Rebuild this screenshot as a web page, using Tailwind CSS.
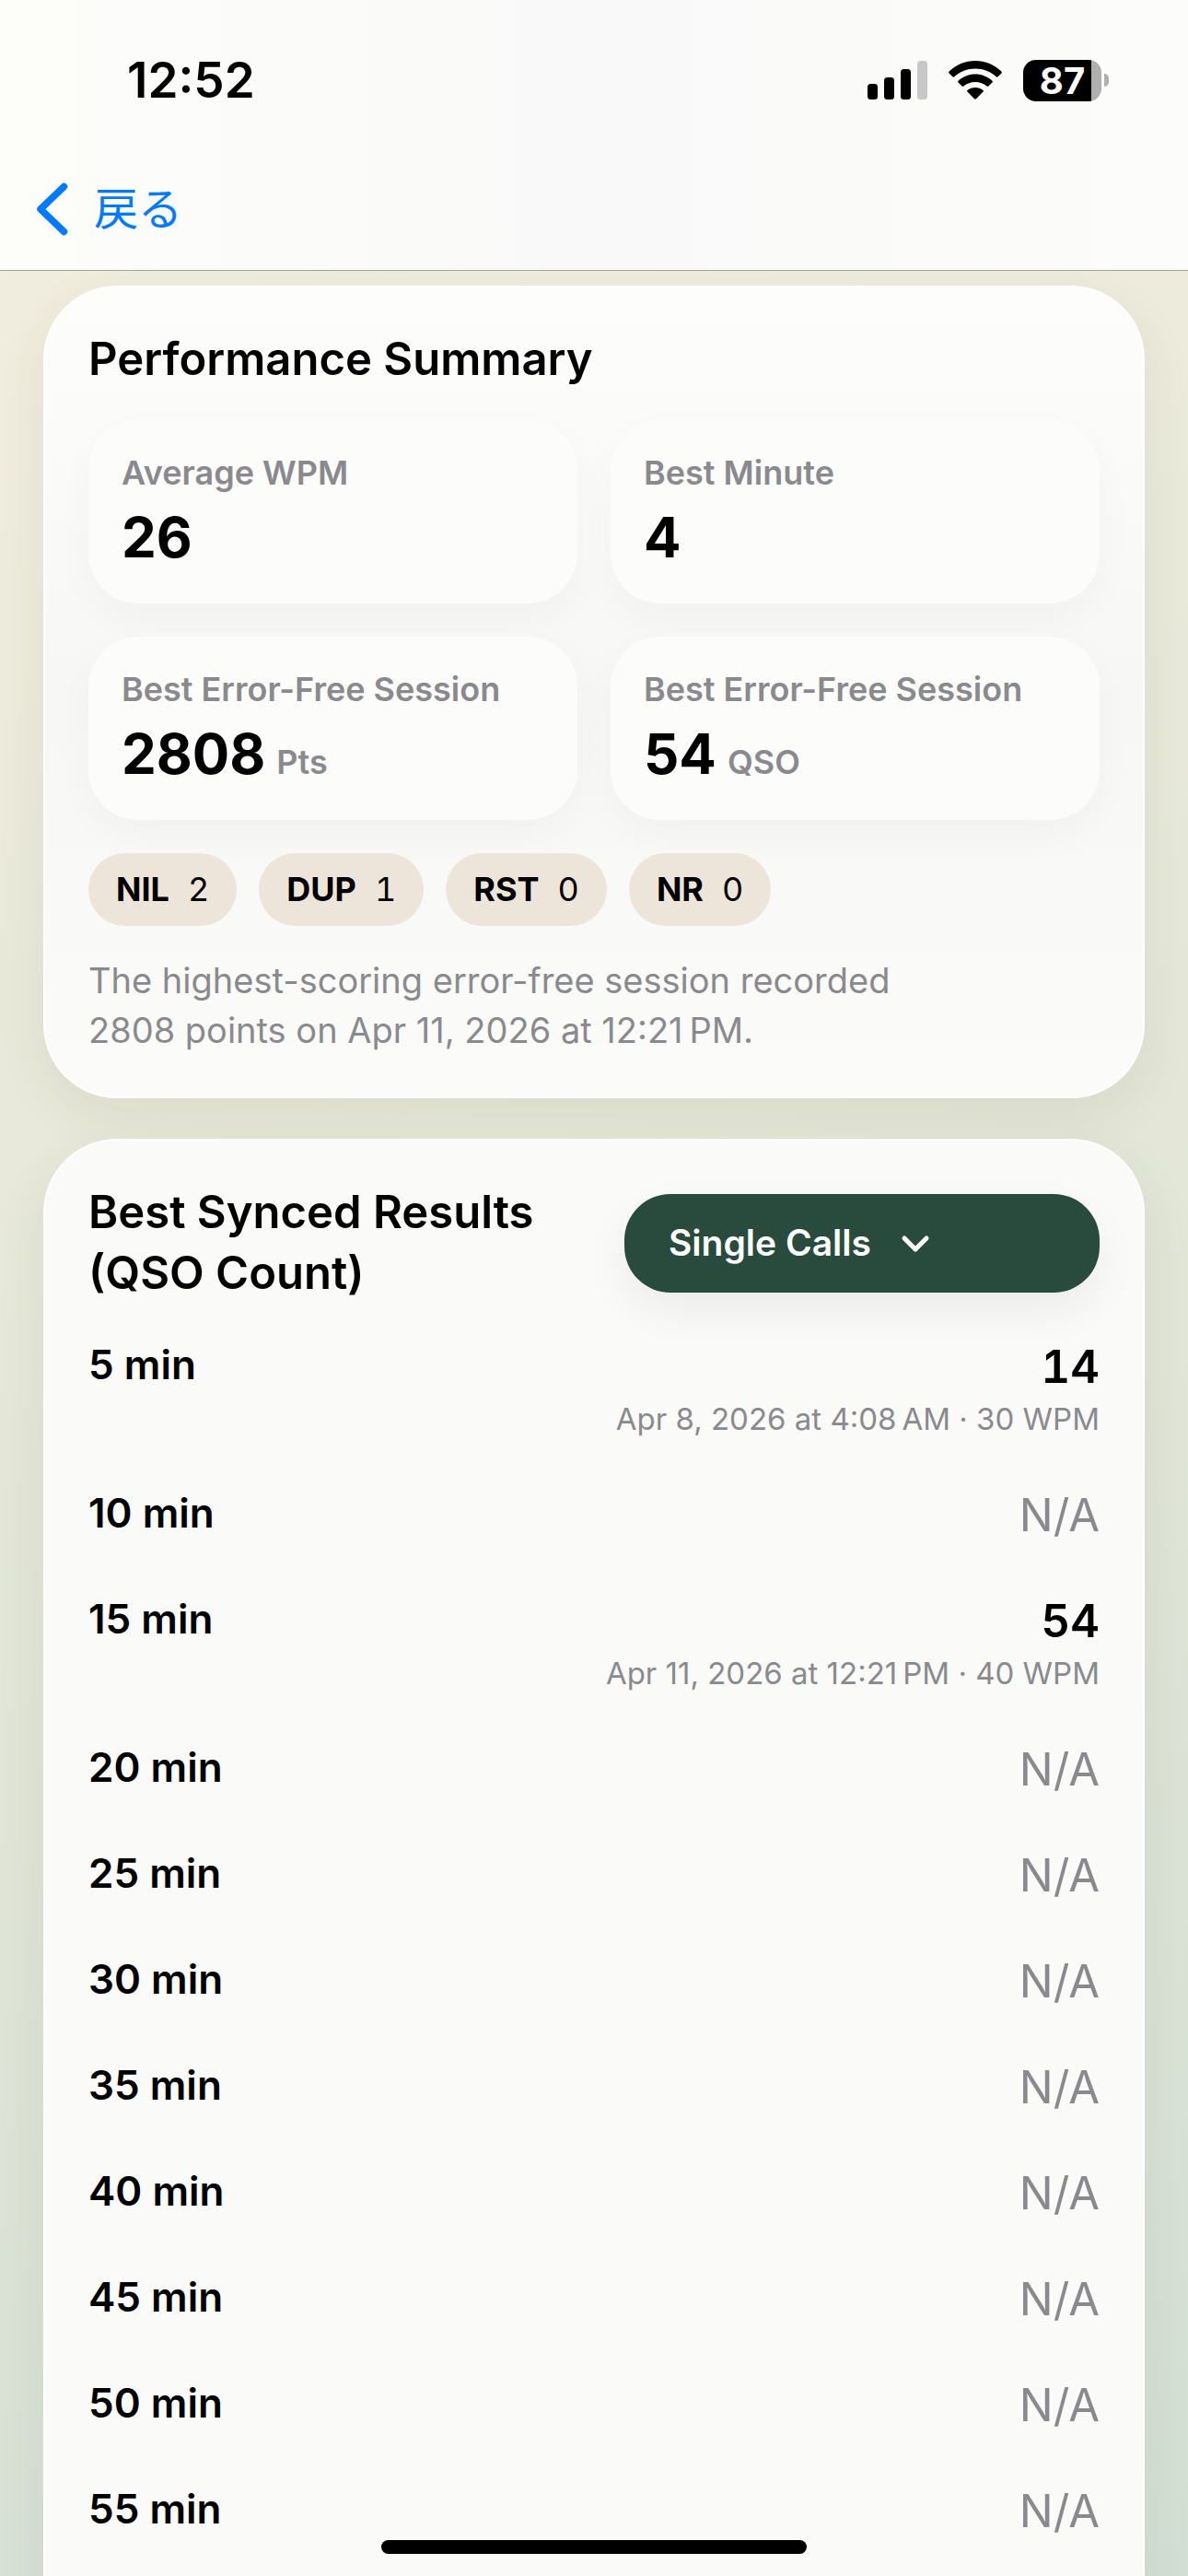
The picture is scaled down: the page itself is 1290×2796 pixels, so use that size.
<!DOCTYPE html>
<html lang="ja">
<head>
    <meta charset="UTF-8">
    <meta name="viewport" content="width=device-width, initial-scale=1.0" />
    <script src="https://cdn.jsdelivr.net/npm/@tailwindcss/browser@4"></script>
    <title>Performance Summary</title>
</head>
<body class="h-screen overflow-hidden flex flex-col bg-linear-160 from-[#f4efe0] via-[#e4e7d8] to-[#d3dfd4] text-black font-['Inter','Noto_Sans_CJK_JP',sans-serif]">

<header class="relative z-10 shrink-0 border-b border-[#a3a399] bg-linear-to-r from-[#fdfdfa] via-[#f9f9f9] to-[#fcfcfa]">
    <!-- status bar -->
    <div class="flex items-center justify-between h-[174px] pl-[138px] pr-[86px]">
        <time class="text-[53px] leading-[64px] font-semibold">12:52</time>
        <div class="flex items-center gap-[23px]">
            <svg class="w-[65px] h-[42px]" viewBox="0 0 65 42" aria-hidden="true">
                <rect x="0" y="25" width="11" height="17" rx="3.5"/>
                <rect x="18" y="18" width="11" height="24" rx="3.5"/>
                <rect x="36" y="9" width="11" height="33" rx="3.5"/>
                <rect x="54" y="0" width="11" height="42" rx="3.5" fill="#c8c8c8"/>
            </svg>
            <svg class="w-[58px] h-[42px]" viewBox="0 0 58 42" aria-hidden="true">
                <path d="M29 0C40 0 50 4.300 57.300 11.600C58 12.200 58 12.800 57.500 13.400L53.600 17.300C53 17.900 52.300 17.900 51.700 17.300C45.500 11.600 37.600 8.600 29 8.600S12.500 11.600 6.300 17.300C5.700 17.900 5 17.900 4.400 17.300L.5 13.400C0 12.800 0 12.200.7 11.600C8 4.300 18 0 29 0Z"/>
                <path d="M29 14.600C36 14.600 42.500 17.200 47.400 21.800C48 22.400 48 23 47.500 23.600L43.400 27.600C42.800 28.200 42.200 28.200 41.600 27.600C38.100 24.600 33.700 23.100 29 23.100S19.900 24.600 16.400 27.600C15.800 28.200 15.200 28.200 14.600 27.600L10.500 23.600C10 23 10 22.400 10.600 21.800C15.500 17.200 22 14.600 29 14.600Z"/>
                <path d="M29 28.900C32.200 28.900 35.200 30 37.500 31.900C38.100 32.500 38.100 33.100 37.600 33.600L30 41.300C29.400 41.900 28.600 41.900 28 41.300L20.400 33.600C19.900 33.100 19.900 32.500 20.500 31.900C22.800 30 25.800 28.900 29 28.900Z"/>
            </svg>
            <div class="flex items-center gap-[3px]">
                <div class="flex items-center justify-center w-[85px] h-[45px] rounded-[14px] bg-linear-to-r from-black from-87% to-[#afafaf] to-87% text-white text-[40px] leading-[45px] font-bold">87</div>
                <div class="w-[5px] h-[14px] rounded-r-full bg-[#afafaf]"></div>
            </div>
        </div>
    </div>
    <nav class="h-[119px] px-[39px] pt-5">
        <a href="#" class="inline-flex items-center gap-7 text-[#007aff] text-[48px] leading-[66px]">
            <svg class="w-[35px] h-[58px]" viewBox="0 0 35 58" fill="none" stroke="currentColor" stroke-width="7.5" stroke-linecap="round" stroke-linejoin="round" aria-hidden="true">
                <path d="M30.500 4.500L5 29L30.500 53.500"/>
            </svg>
            戻る
        </a>
    </nav>
</header>

<main class="flex flex-col gap-11 px-[47px] pt-4">
    <section class="shrink-0 rounded-[80px] border-2 border-white/90 bg-linear-to-b from-[#fdfdfb] via-[#f7f7f5] to-[#fbfbf9] px-[47px] py-[45px] shadow-[0_18px_54px_rgba(60,70,40,0.08)]">
        <h2 class="text-[49px] leading-[66px] font-semibold">Performance Summary</h2>

        <dl class="grid grid-cols-2 gap-9 mt-[33px]">
            <div class="rounded-[54px] bg-[#fcfcfb] p-9 shadow-[0_16px_44px_rgba(0,0,0,0.03)]">
                <dt class="text-[36px] leading-[43px] font-semibold text-[#8a8a8e]">Average WPM</dt>
                <dd class="mt-3 text-[60px] leading-[72px] font-bold">26</dd>
            </div>
            <div class="rounded-[54px] bg-[#fcfcfb] p-9 shadow-[0_16px_44px_rgba(0,0,0,0.03)]">
                <dt class="text-[36px] leading-[43px] font-semibold text-[#8a8a8e]">Best Minute</dt>
                <dd class="mt-3 text-[60px] leading-[72px] font-bold">4</dd>
            </div>
            <div class="rounded-[54px] bg-[#fcfcfb] p-9 shadow-[0_16px_44px_rgba(0,0,0,0.03)]">
                <dt class="text-[36px] leading-[43px] font-semibold text-[#8a8a8e]">Best Error-Free Session</dt>
                <dd class="flex items-baseline gap-3 mt-3 text-[60px] leading-[72px] font-bold">2808 <span class="text-[36px] leading-[43px] font-semibold text-[#8a8a8e]">Pts</span></dd>
            </div>
            <div class="rounded-[54px] bg-[#fcfcfb] p-9 shadow-[0_16px_44px_rgba(0,0,0,0.03)]">
                <dt class="text-[36px] leading-[43px] font-semibold text-[#8a8a8e]">Best Error-Free Session</dt>
                <dd class="flex items-baseline gap-3 mt-3 text-[60px] leading-[72px] font-bold">54 <span class="text-[36px] leading-[43px] font-semibold text-[#8a8a8e]">QSO</span></dd>
            </div>
        </dl>

        <ul class="flex gap-6 mt-9 text-[36px] leading-[43px] tabular-nums">
            <li class="flex gap-5 rounded-full bg-[#ede5d9] px-[30px] py-[18px]"><b class="font-bold">NIL</b> 2</li>
            <li class="flex gap-5 rounded-full bg-[#ede5d9] px-[30px] py-[18px]"><b class="font-bold">DUP</b> 1</li>
            <li class="flex gap-5 rounded-full bg-[#ede5d9] px-[30px] py-[18px]"><b class="font-bold">RST</b> 0</li>
            <li class="flex gap-5 rounded-full bg-[#ede5d9] px-[30px] py-[18px]"><b class="font-bold">NR</b> 0</li>
        </ul>

        <p class="mt-8 text-[38px] leading-[54px] text-[#8a8a8e]">The highest-scoring error-free session recorded<br>2808 points on Apr 11, 2026 at 12:21&#8239;PM.</p>
    </section>

    <section class="shrink-0 rounded-[80px] border-2 border-white/90 bg-[#fafaf9] px-[47px] pt-[45px] pb-36 shadow-[0_18px_54px_rgba(60,70,40,0.08)]">
        <div class="grid grid-cols-[1fr_516px] items-center gap-6">
            <h2 class="text-[49px] leading-[66px] font-semibold"><label for="mode">Best Synced Results<br>(QSO Count)</label></h2>
            <div class="relative">
                <select id="mode" class="block w-full h-[107px] appearance-none rounded-[50px] bg-[#294b3e] pl-12 text-[39px] font-semibold text-white shadow-[0_20px_48px_rgba(0,0,0,0.06)]">
                    <option>Single Calls</option>
                </select>
                <svg class="absolute left-[300px] top-[43px] w-[32px] h-[22px] pointer-events-none" viewBox="0 0 32 22" fill="none" stroke="white" stroke-width="5" stroke-linecap="round" stroke-linejoin="round" aria-hidden="true">
                    <path d="M4 5L16 17L28 5"/>
                </svg>
            </div>
        </div>

        <table class="w-full mt-9">
            <tbody id="results"></tbody>
        </table>
    </section>
</main>

<div class="fixed bottom-6 left-1/2 -translate-x-1/2 w-[462px] h-[15px] rounded-full bg-black"></div>

<script>
    const results = [
        { min: 5, count: 14, info: 'Apr 8, 2026 at 4:08\u202fAM · 30 WPM' },
        { min: 10 },
        { min: 15, count: 54, info: 'Apr 11, 2026 at 12:21\u202fPM · 40 WPM' },
        { min: 20 },
        { min: 25 },
        { min: 30 },
        { min: 35 },
        { min: 40 },
        { min: 45 },
        { min: 50 },
        { min: 55 },
    ];

    let rowsHTML = '';
    for (const row of results) {
        const value = row.count
            ? `<div class="text-[49px] leading-[66px] font-semibold tabular-nums">${row.count}</div>
               <div class="text-[33px] leading-[46px] text-[#8a8a8e]">${row.info}</div>`
            : `<div class="text-[49px] leading-[66px] text-[#8a8a8e]">N/A</div>`;
        rowsHTML += `
        <tr class="align-top">
            <th scope="row" class="p-0 text-left text-[44px] leading-[60px] font-semibold">${row.min} min</th>
            <td class="p-0 pb-[49px] text-right">${value}</td>
        </tr>`;
    }
    document.getElementById('results').innerHTML = rowsHTML;
</script>
</body>
</html>
